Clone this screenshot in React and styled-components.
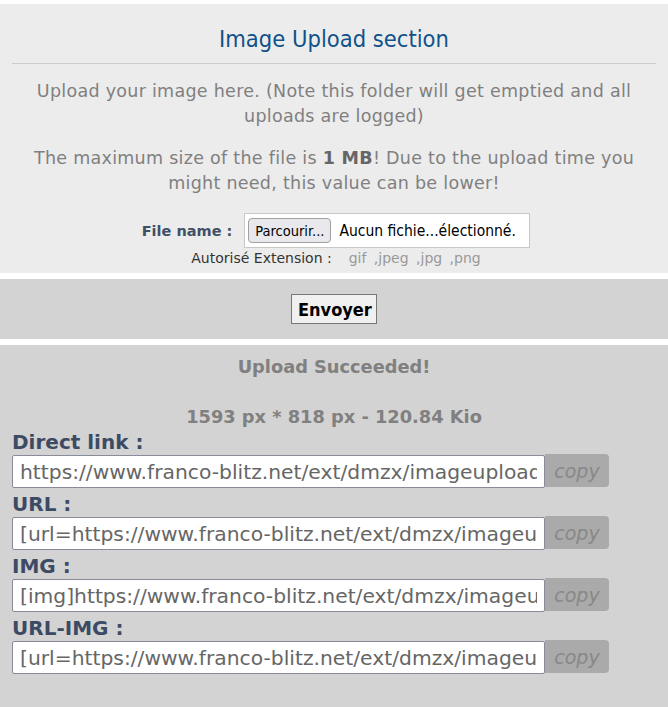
import React from 'react'
import styled, { createGlobalStyle } from 'styled-components'

const GlobalStyle = createGlobalStyle`
    body {
        margin: 0;
        background: #fff;
        font-family: "DejaVu Sans", Verdana, sans-serif;
    }
`

const Page = styled.div`
    padding-top: 4px;
`

const UploadPanel = styled.section`
    background: #ececec;
    padding: 21px 12px 7px;
    text-align: center;
`

const Title = styled.h2`
    margin: 0;
    padding-bottom: 10px;
    border-bottom: 1px solid #cccccc;
    color: #105289;
    font-family: "DejaVu Sans Condensed", sans-serif;
    font-size: 23.5px;
    font-weight: normal;
    line-height: 28px;
`

const Notice = styled.p`
    margin: ${(p) => p.$top}px 0 0;
    color: #808080;
    font-size: 17.5px;
    letter-spacing: 0.28px;
    line-height: 25px;

    b {
        color: #666;
    }
`

const FileRow = styled.div`
    display: flex;
    justify-content: center;
    align-items: center;
    gap: 12px;
    margin-top: 17px;
    padding-left: 4px;
`

const FileLabel = styled.label`
    color: #425067;
    font-size: 14.5px;
    font-weight: bold;
`

const FileBox = styled.div`
    display: flex;
    align-items: center;
    gap: 8px;
    width: 286px;
    height: 35px;
    box-sizing: border-box;
    padding: 0 3px;
    background: #fff;
    border: 1px solid #c8c8c8;
    font-family: "DejaVu Sans Condensed", sans-serif;
`

const BrowseButton = styled.button`
    height: 25px;
    padding: 0 6px;
    background: #e9e9ed;
    border: 1px solid #a0a0a0;
    border-radius: 4px;
    color: #000;
    font-family: inherit;
    font-size: 14.5px;
`

const FileState = styled.span`
    color: #000;
    font-size: 15.5px;
    white-space: nowrap;
`

const Extensions = styled.div`
    margin-top: 2px;
    padding-left: 4px;
    color: #333;
    font-size: 14px;
    line-height: 16px;

    span {
        color: #999;
        margin-left: 17px;
        word-spacing: 3px;
    }
`

const SubmitPanel = styled.div`
    margin-top: 6px;
    height: 60px;
    background: #d3d3d3;
    display: flex;
    justify-content: center;
    align-items: center;
`

const SubmitButton = styled.button`
    width: 86px;
    height: 30px;
    background: #f0f0f0;
    border: 1px solid #777;
    color: #000;
    font-family: "DejaVu Sans Condensed", sans-serif;
    font-size: 18px;
    font-weight: bold;
`

const ResultPanel = styled.section`
    margin-top: 6px;
    background: #d3d3d3;
    padding: 10px 12px 40px;
`

const Status = styled.p`
    margin: ${(p) => p.$top}px 0 0;
    text-align: center;
    color: #808080;
    font-size: 17.8px;
    font-weight: bold;
    line-height: 24px;
`

const LinkList = styled.div`
    margin-top: -3px;
`

const LinkLabel = styled.div`
    padding-top: 3px;
    color: #3d4a63;
    font-size: 20px;
    font-weight: bold;
    line-height: 26px;
`

const LinkRow = styled.div`
    display: flex;
    align-items: flex-start;
`

const LinkInput = styled.input`
    width: 533px;
    height: 33px;
    box-sizing: border-box;
    padding: 0 7px;
    background: #fff;
    border: 1px solid #8a8a9a;
    border-radius: 2px;
    color: #666;
    font-family: inherit;
    font-size: 20.3px;
    outline: none;
`

const CopyButton = styled.button`
    width: 64px;
    height: 33px;
    margin-top: -1px;
    background: #aaaaaa;
    border: none;
    border-radius: 0 4px 4px 0;
    color: #888;
    font-family: inherit;
    font-size: 19px;
    font-style: italic;
`

const base = 'https://www.franco-blitz.net/ext/dmzx/imageupload/img-files/2/9f1c3a8e5b2d7f64.png'

const links = [
    { label: 'Direct link :', value: base },
    { label: 'URL :', value: `[url=${base}][/url]` },
    { label: 'IMG :', value: `[img]${base}[/img]` },
    { label: 'URL-IMG :', value: `[url=${base}][img]${base}[/img][/url]` },
]

export default function App() {
    return (
        <Page>
            <GlobalStyle />
            <UploadPanel>
                <Title>Image Upload section</Title>
                <Notice $top={15}>
                    Upload your image here. (Note this folder will get emptied and all uploads are logged)
                </Notice>
                <Notice $top={17}>
                    The maximum size of the file is <b>1 MB</b>! Due to the upload time you might need, this value can be lower!
                </Notice>
                <FileRow>
                    <FileLabel>File name :</FileLabel>
                    <FileBox>
                        <BrowseButton>Parcourir...</BrowseButton>
                        <FileState>Aucun fichie...électionné.</FileState>
                    </FileBox>
                </FileRow>
                <Extensions>
                    Autorisé Extension :<span>gif ,jpeg ,jpg ,png</span>
                </Extensions>
            </UploadPanel>
            <SubmitPanel>
                <SubmitButton>Envoyer</SubmitButton>
            </SubmitPanel>
            <ResultPanel>
                <Status $top={0}>Upload Succeeded!</Status>
                <Status $top={26}>1593 px * 818 px - 120.84 Kio</Status>
                <LinkList>
                    {links.map((link) => (
                        <div key={link.label}>
                            <LinkLabel>{link.label}</LinkLabel>
                            <LinkRow>
                                <LinkInput readOnly value={link.value} />
                                <CopyButton>copy</CopyButton>
                            </LinkRow>
                        </div>
                    ))}
                </LinkList>
            </ResultPanel>
        </Page>
    )
}
